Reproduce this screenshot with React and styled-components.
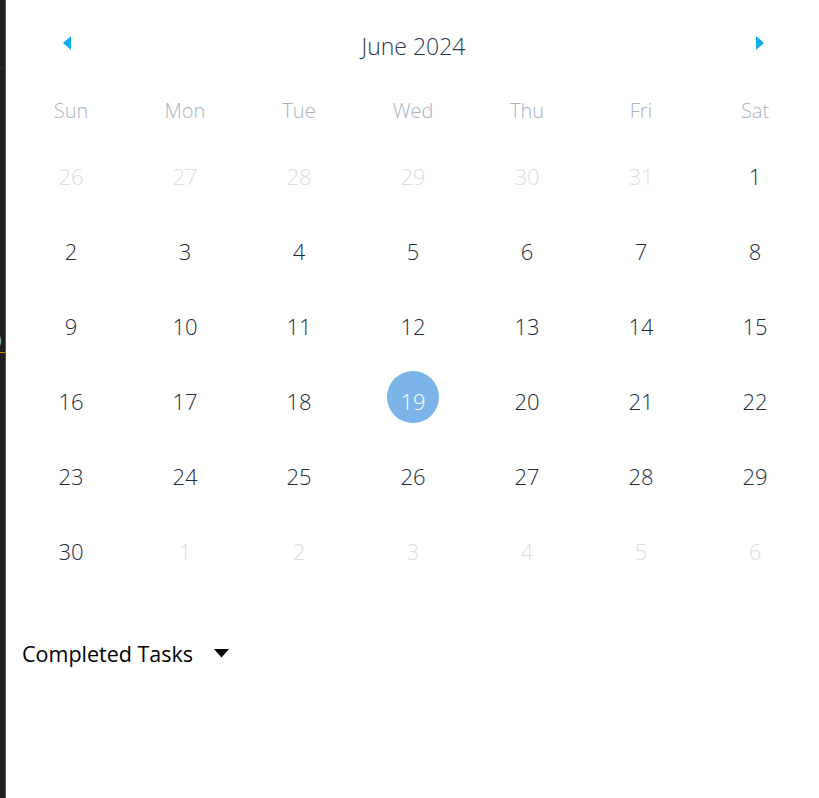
import React from 'react';
import styled, { createGlobalStyle } from 'styled-components';

const GlobalStyle = createGlobalStyle`
  html, body {
    margin: 0;
    padding: 0;
    background: #ffffff;
  }
  body {
    font-family: 'Open Sans', 'Noto Sans', sans-serif;
  }
`;

const Page = styled.div`
  display: flex;
  width: 819px;
  height: 798px;
  overflow: hidden;
`;

const Strip = styled.div`
  width: 5px;
  flex-shrink: 0;
  background: #1e1e1e;
  border-right: 1px solid #5a5a5a;
  display: flex;
  flex-direction: column;
  overflow: hidden;
`;

const StripTop = styled.div`
  height: 68px;
  border-bottom: 1px solid #2e2e2e;
`;

const StripGlyph = styled.div`
  margin-top: 262px;
  margin-left: -5px;
  color: #7ec3f0;
  font-family: 'DejaVu Sans Mono', monospace;
  font-size: 15px;
  line-height: 20px;
`;

const StripRule = styled.div`
  margin-top: 1px;
  height: 1px;
  background: #b89a00;
`;

const Main = styled.div`
  flex: 1;
  display: flex;
  flex-direction: column;
`;

const Header = styled.div`
  height: 70px;
  margin-top: 10px;
  display: flex;
  align-items: center;
  justify-content: space-between;
  padding: 0 54px 0 56px;
`;

const ArrowButton = styled.button`
  border: none;
  background: none;
  padding: 0;
  width: 10px;
  height: 16px;
  display: flex;
  align-items: center;
  justify-content: center;
  margin-top: ${p => p.$offset || 0}px;
  cursor: pointer;
`;

const Title = styled.div`
  font-size: 23px;
  font-weight: 300;
  color: #2a3a4c;
  margin-top: 2px;
`;

const Grid = styled.div`
  display: grid;
  grid-template-columns: repeat(7, 1fr);
  padding: 0 7px 0 8px;
`;

const WeekDay = styled.div`
  height: 58px;
  padding-top: 2px;
  box-sizing: border-box;
  display: flex;
  align-items: center;
  justify-content: center;
  font-size: 20px;
  font-weight: 300;
  color: #a9b4c3;
`;

const DayCell = styled.div`
  height: 75px;
  display: flex;
  align-items: center;
  justify-content: center;
  font-size: 22px;
  font-weight: 300;
  color: ${p => (p.$muted ? '#d9e0e8' : '#1c2a3a')};
`;

const Selected = styled.div`
  width: 52px;
  height: 52px;
  border-radius: 50%;
  background: #7ab4e8;
  color: #ffffff;
  box-sizing: border-box;
  padding-top: 8px;
  margin-bottom: 8px;
  display: flex;
  align-items: center;
  justify-content: center;
`;

const Section = styled.div`
  margin-top: 50px;
  padding-left: 16px;
  display: flex;
  align-items: center;
  height: 30px;
  gap: 21px;
`;

const SectionLabel = styled.span`
  font-size: 21.5px;
  font-weight: 400;
  color: #000000;
  font-family: 'Open Sans', 'Noto Sans', sans-serif;
`;

const weekDays = ['Sun', 'Mon', 'Tue', 'Wed', 'Thu', 'Fri', 'Sat'];

const buildDays = () => {
  const days = [];
  [26, 27, 28, 29, 30, 31].forEach(d => days.push({ d, muted: true }));
  for (let d = 1; d <= 30; d++) days.push({ d, muted: false });
  for (let d = 1; d <= 6; d++) days.push({ d, muted: true });
  return days;
};

const LeftArrow = () => (
  <svg width="10" height="16" viewBox="0 0 10 16">
    <path d="M9 1 L1 8 L9 15 Z" fill="#0aaeee" />
  </svg>
);

const RightArrow = () => (
  <svg width="10" height="16" viewBox="0 0 10 16">
    <path d="M1 1 L9 8 L1 15 Z" fill="#0aaeee" />
  </svg>
);

const Caret = () => (
  <svg width="15" height="9" viewBox="0 0 15 9">
    <path d="M0 0 L15 0 L7.5 8.5 Z" fill="#000000" />
  </svg>
);

export default function App() {
  const days = buildDays();
  return (
    <>
      <GlobalStyle />
      <Page>
        <Strip>
          <StripTop />
          <StripGlyph>)</StripGlyph>
          <StripRule />
        </Strip>
        <Main>
          <Header>
            <ArrowButton $offset={-4}>
              <LeftArrow />
            </ArrowButton>
            <Title>June 2024</Title>
            <ArrowButton $offset={-5}>
              <RightArrow />
            </ArrowButton>
          </Header>
          <Grid>
            {weekDays.map(w => (
              <WeekDay key={w}>{w}</WeekDay>
            ))}
            {days.map((item, i) => (
              <DayCell key={i} $muted={item.muted}>
                {!item.muted && item.d === 19 ? <Selected>19</Selected> : item.d}
              </DayCell>
            ))}
          </Grid>
          <Section>
            <SectionLabel>Completed Tasks</SectionLabel>
            <Caret />
          </Section>
        </Main>
      </Page>
    </>
  );
}
